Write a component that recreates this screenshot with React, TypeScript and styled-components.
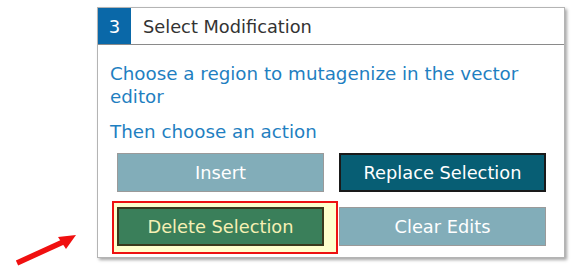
import React from 'react';
import styled, { createGlobalStyle } from 'styled-components';

const GlobalStyle = createGlobalStyle`
  html, body {
    margin: 0;
    padding: 0;
    background: #ffffff;
  }
  body {
    font-family: "DejaVu Sans", Verdana, sans-serif;
  }
`;

const Page = styled.div`
  position: relative;
  width: 586px;
  height: 278px;
  padding: 7px 0 0 97px;
  box-sizing: border-box;
  overflow: hidden;
`;

const Panel = styled.section`
  width: 468px;
  height: 251px;
  box-sizing: border-box;
  border: 1px solid #b4b4b4;
  background: #ffffff;
  box-shadow: 2px 2px 3px rgba(0, 0, 0, 0.35);
  display: flex;
  flex-direction: column;
`;

const Header = styled.header`
  display: flex;
  align-items: stretch;
  height: 37px;
  box-sizing: border-box;
  border-bottom: 1px solid #8a8a8a;
`;

const StepNumber = styled.div`
  width: 33px;
  display: flex;
  align-items: center;
  justify-content: center;
  background: #0a68a8;
  color: #ffffff;
  font-size: 18px;
`;

const Title = styled.h3`
  margin: 0;
  padding-left: 12px;
  display: flex;
  align-items: center;
  font-size: 17.8px;
  font-weight: normal;
  color: #333333;
`;

const Body = styled.div`
  padding: 17px 0 0 12px;
`;

const Instruction = styled.p`
  margin: 0 0 12px;
  width: 440px;
  font-size: 18.3px;
  line-height: 23px;
  color: #1f7fc1;

  &:last-of-type {
    margin-bottom: 10px;
  }
`;

const Actions = styled.div`
  display: grid;
  grid-template-columns: 207px 207px;
  column-gap: 15px;
  row-gap: 15px;
  margin-left: 7px;
`;

const Cell = styled.div`
  position: relative;
  isolation: isolate;
`;

type Tone = 'muted' | 'primary' | 'danger';

const tones: Record<Tone, { bg: string; border: string; color: string; width: number }> = {
  muted: { bg: '#82adb9', border: '#9a9a9a', color: '#ffffff', width: 1 },
  primary: { bg: '#075e74', border: '#1a1a1a', color: '#ffffff', width: 2 },
  danger: { bg: '#3a7f5a', border: '#3b3a1c', color: '#f6f0b4', width: 2 },
};

const ActionButton = styled.button<{ $tone: Tone }>`
  position: relative;
  z-index: 1;
  width: 207px;
  height: 39px;
  box-sizing: border-box;
  padding: 0;
  border: ${(p) => tones[p.$tone].width}px solid ${(p) => tones[p.$tone].border};
  background: ${(p) => tones[p.$tone].bg};
  color: ${(p) => tones[p.$tone].color};
  font-family: "DejaVu Sans", Verdana, sans-serif;
  font-size: 17.8px;
  cursor: pointer;
`;

const Highlight = styled.span`
  position: absolute;
  z-index: 0;
  top: -6px;
  left: -5px;
  right: -14px;
  bottom: -8px;
  border: 2px solid #ee1111;
  background: #ffffcc;
`;

const Pointer = styled.svg`
  position: absolute;
  left: 10px;
  top: 228px;
`;

const App: React.FC = () => {
  return (
    <>
      <GlobalStyle />
      <Page>
        <Panel>
          <Header>
            <StepNumber>3</StepNumber>
            <Title>Select Modification</Title>
          </Header>
          <Body>
            <Instruction>Choose a region to mutagenize in the vector editor</Instruction>
            <Instruction>Then choose an action</Instruction>
            <Actions>
              <Cell>
                <ActionButton $tone="muted">Insert</ActionButton>
              </Cell>
              <Cell>
                <ActionButton $tone="primary">Replace Selection</ActionButton>
              </Cell>
              <Cell>
                <Highlight />
                <ActionButton $tone="danger">Delete Selection</ActionButton>
              </Cell>
              <Cell>
                <ActionButton $tone="muted">Clear Edits</ActionButton>
              </Cell>
            </Actions>
          </Body>
        </Panel>
        <Pointer width="72" height="42" viewBox="0 0 72 42">
          <line x1="7" y1="35" x2="53" y2="14" stroke="#f01010" strokeWidth="5.5" />
          <polygon points="66,7 48,9 56,21" fill="#f01010" />
        </Pointer>
      </Page>
    </>
  );
};

export default App;
